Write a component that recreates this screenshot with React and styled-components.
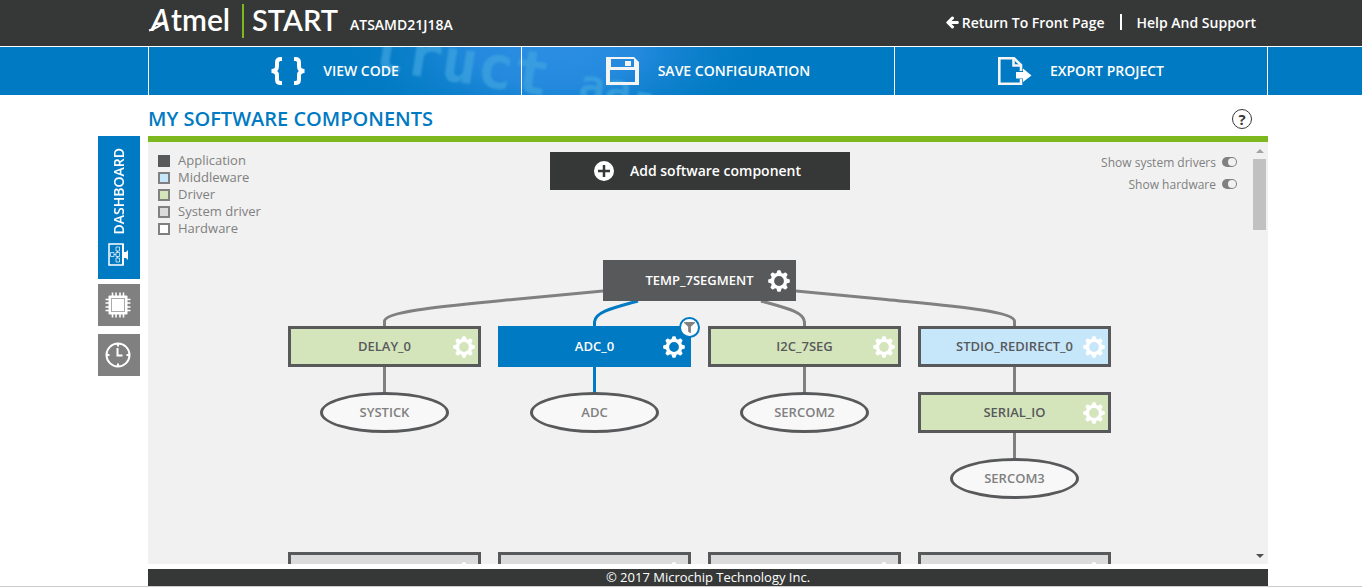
import { useState } from "react";
import { FaArrowLeft, FaFilter } from "react-icons/fa";
import styled, { createGlobalStyle } from "styled-components";

const GlobalStyle = createGlobalStyle`
  * {
    box-sizing: border-box;
  }
  body {
    margin: 0;
    background: #fff;
    font-family: "Open Sans", "Noto Sans", sans-serif;
    font-size: 13px;
    color: #808080;
  }
  button {
    font-family: inherit;
    cursor: pointer;
  }
`;
const Page = styled.div`
  display: flex;
  flex-direction: column;
  height: 100vh;
  border-bottom: 1px solid #ccc;
`;
/* every band keeps its content in the same centred column */
const Band = styled.div`
  padding-left: 4px;
  display: flex;
  justify-content: center;
`;
const Column = styled.div`
  width: 100%;
  max-width: 1170px;
  padding-left: 50px;
  display: flex;
`;
const HeaderBand = styled(Band).attrs({ as: "header" })`
  background: #363837;
  border-bottom: 1px solid #fff;
`;
const HeaderRow = styled(Column)`
  height: 46px;
  padding-right: 12px;
  justify-content: space-between;
  font-size: 14px;
  font-weight: 600;
  color: #fff;
`;
const Brand = styled.div`
  display: flex;
  align-items: flex-start;
`;
const Chip = styled.span`
  line-height: 20px;
  padding: 15px 0 0 8px;
`;
const TopLinks = styled.nav`
  display: flex;
  align-items: center;
  gap: 15px;
  padding-bottom: 2px;
  a {
    display: flex;
    align-items: center;
    gap: 3px;
    color: #fff;
    text-decoration: none;
  }
`;
const Divider = styled.span`
  width: 2px;
  height: 16px;
  background: #fff;
`;
const ArrowIcon = styled(FaArrowLeft)`
  stroke: #fff;
  stroke-width: 40px;
`;
const ActionBand = styled(Band)`
  position: relative;
  overflow: hidden;
  background: #007ac2;
`;
const Texture = styled.svg`
  position: absolute;
  top: 0;
  left: 50%;
  margin-left: -381px;
`;
const ActionRow = styled(Column)`
  position: relative;
`;
const Actions = styled.div`
  flex: 1;
  display: grid;
  grid-template-columns: repeat(3, 1fr);
  height: 48px;
  border-left: 1px solid #fff;
`;
const Action = styled.button`
  display: flex;
  align-items: center;
  justify-content: center;
  gap: 18px;
  padding: 0;
  border: 0;
  border-right: 1px solid #fff;
  background: none;
  color: #fff;
  font-size: 14px;
  font-weight: 600;
`;
const ButtonText = styled.span`
  padding-bottom: 2px;
`;
const MainBand = styled(Band).attrs({ as: "main" })`
  flex: 1;
  min-height: 0;
`;
const MainRow = styled(Column)`
  padding-left: 0;
`;
const Tabs = styled.nav`
  width: 50px;
  padding-top: 41px;
`;
const Tab = styled.button`
  display: flex;
  flex-direction: column;
  align-items: center;
  justify-content: center;
  gap: 9px;
  width: 42px;
  height: ${(p) => (p.$active ? "143px" : "42px")};
  margin-bottom: ${(p) => (p.$active ? "5px" : "8px")};
  padding: 0 2px 0 0;
  border: 0;
  background: ${(p) => (p.$active ? "#007ac2" : "#808080")};
  color: #fff;
  font-size: 14px;
  font-weight: 600;
`;
const TabLabel = styled.span`
  writing-mode: vertical-rl;
  transform: rotate(180deg);
`;
const Content = styled.div`
  flex: 1;
  min-width: 0;
  display: flex;
  flex-direction: column;
`;
const TitleRow = styled.div`
  display: flex;
  align-items: center;
  justify-content: space-between;
  height: 41px;
  padding: 6px 16px 0 0;
  h1 {
    margin: 0;
    font-size: 20px;
    font-weight: 600;
    color: #007ac2;
  }
`;
const HelpButton = styled.button`
  width: 20px;
  height: 20px;
  padding: 0;
  border: 1px solid #363837;
  border-radius: 50%;
  background: none;
  color: #363837;
  font-size: 15px;
  font-weight: 700;
  line-height: 18px;
`;
const Panel = styled.div`
  flex: 1;
  min-height: 0;
  display: flex;
  border-top: 6px solid #7db91e;
  background: #f1f1f1;
`;
const Canvas = styled.div`
  flex: 1;
  overflow: hidden;
`;
const Toolbar = styled.div`
  display: grid;
  grid-template-columns: 1fr 300px 1fr;
  align-items: start;
  padding: 10px 10px 0;
`;
const Legend = styled.ul`
  margin: 0;
  padding: 0;
  list-style: none;
`;
const LegendItem = styled.li`
  display: flex;
  align-items: center;
  gap: 8px;
  line-height: 17px;
`;
const Swatch = styled.span`
  width: 12px;
  height: 12px;
  border: 2px solid ${(p) => p.$border || "#808080"};
  background: ${(p) => p.$fill};
`;
const AddButton = styled.button`
  display: flex;
  align-items: center;
  justify-content: center;
  gap: 16px;
  height: 38px;
  padding: 0 4px 0 0;
  border: 0;
  background: #363837;
  color: #fff;
  font-size: 14px;
  font-weight: 600;
`;
const Toggles = styled.div`
  padding-right: 4px;
  font-size: 12px;
`;
const ToggleLabel = styled.label`
  display: flex;
  align-items: center;
  justify-content: flex-end;
  gap: 6px;
  line-height: 22px;
`;
const Toggle = styled.input.attrs({ type: "checkbox" })`
  appearance: none;
  display: flex;
  justify-content: flex-end;
  width: 15px;
  height: 10px;
  margin: 0 0 2px;
  padding: 1px;
  border-radius: 5px;
  background: #808080;
  cursor: pointer;
  &::after {
    content: "";
    width: 8px;
    height: 8px;
    border-radius: 50%;
    background: #f1f1f1;
  }
  &:checked {
    background: #007ac2;
  }
`;
const Diagram = styled.div`
  position: relative;
  width: 823px;
  height: 400px;
  margin: 23px auto 0;
`;
const Edges = styled.svg`
  position: absolute;
  top: 0;
  left: 0;
`;
const nodeColors = {
  application: { fill: "#58595b", border: "#58595b", text: "#fff" },
  middleware: { fill: "#c6e6fa", border: "#58595b", text: "#58595b" },
  driver: { fill: "#d4e5bb", border: "#58595b", text: "#58595b" },
  system: { fill: "#dbdbdb", border: "#58595b", text: "#58595b" },
  selected: { fill: "#007ac2", border: "#007ac2", text: "#fff" },
};
const Node = styled.button`
  position: absolute;
  left: ${(p) => p.$x}px;
  top: ${(p) => p.$y}px;
  width: 193px;
  height: 41px;
  padding: 0 0 2px;
  border: 3px solid ${(p) => nodeColors[p.$kind].border};
  background: ${(p) => nodeColors[p.$kind].fill};
  color: ${(p) => nodeColors[p.$kind].text};
  font-size: 13px;
  font-weight: 600;
`;
const Hardware = styled.button`
  position: absolute;
  left: ${(p) => p.$x}px;
  top: ${(p) => p.$y}px;
  width: 129px;
  height: 41px;
  padding: 0 0 2px;
  border: 3px solid #58595b;
  border-radius: 50%;
  background: #f8f8f8;
  color: #808080;
  font-size: 13px;
  font-weight: 600;
`;
const GearSvg = styled.svg`
  position: absolute;
  top: 7px;
  right: 3px;
`;
const Badge = styled.span`
  position: absolute;
  left: 391px;
  top: 57px;
  display: flex;
  align-items: center;
  justify-content: center;
  width: 21px;
  height: 21px;
  border: 2px solid #007ac2;
  border-radius: 50%;
  background: #fff;
  color: #808080;
`;
const Scrollbar = styled.div`
  width: 17px;
  display: flex;
  flex-direction: column;
  align-items: center;
`;
const ScrollArrow = styled.span`
  display: flex;
  align-items: center;
  justify-content: center;
  height: 17px;
  color: ${(p) => (p.$on ? "#505050" : "#a3a3a3")};
`;
const ScrollTrack = styled.div`
  flex: 1;
`;
const ScrollThumb = styled.div`
  width: 13px;
  height: 71px;
  background: #c1c1c1;
`;
const FooterBand = styled(Band).attrs({ as: "footer" })`
  padding-top: 5px;
`;
const FooterText = styled.div`
  flex: 1;
  background: #363837;
  color: #fff;
  font-size: 13px;
  font-weight: 500;
  line-height: 17px;
  text-align: center;
`;

function Logo() {
  return (
    <svg width="194" height="42" role="img" aria-label="Atmel START">
      <g fill="#fff" fontFamily="Lato, sans-serif">
        <text x="3" y="31" fontSize="30" fontStyle="italic">
          A
        </text>
        <text x="23" y="31" fontSize="30">
          tmel
        </text>
        <text x="104" y="31" fontSize="29">
          START
        </text>
      </g>
      <path d="M1 30.500Q10 28 16 22" stroke="#fff" strokeWidth="2" fill="none" />
      <rect x="94" y="4" width="2" height="34" fill="#7db91e" />
    </svg>
  );
}

function Gear() {
  return (
    <GearSvg width="22" height="22" viewBox="-11 -11 22 22" fill="#fff">
      <circle r="6.6" fill="none" stroke="#fff" strokeWidth="3.4" />
      {[0, 45, 90, 135, 180, 225, 270, 315].map((a) => (
        <path
          key={a}
          d="M-2.6 -7.4L-1.7 -10.2Q-1.5 -10.8 -0.9 -10.8H0.9Q1.5 -10.8 1.7 -10.2L2.6 -7.4Z"
          transform={`rotate(${a})`}
        />
      ))}
    </GearSvg>
  );
}

function BracesIcon() {
  return (
    <svg width="34" height="28" fill="none" stroke="#fff" strokeWidth="4">
      <path d="M11 2H9.500Q6 2 6 5.500V9.500Q6 14 0.500 14Q6 14 6 18.500V22.500Q6 26 9.500 26H11" />
      <path d="M23 2H24.500Q28 2 28 5.500V9.500Q28 14 33.500 14Q28 14 28 18.500V22.500Q28 26 24.500 26H23" />
    </svg>
  );
}

function SaveIcon() {
  return (
    <svg width="34" height="28" fill="#f4f4f4">
      <path
        fillRule="evenodd"
        d="M0 0H28L33 5V28H0ZM5 2V10H28V2ZM4 13V25H29V13Z"
      />
      <rect x="19" y="4" width="6" height="5" />
    </svg>
  );
}

function ExportIcon() {
  return (
    <svg width="34" height="28" fill="none" stroke="#f4f4f4" strokeWidth="2.6">
      <path d="M23 14V8L16 1.300H1.300V26.700H23V22" />
      <path d="M15.500 1.300V8.500H23" />
      <path d="M18 15H25V11.500L33.500 18.500L25 25V21.500H18Z" fill="#fff" stroke="none" />
    </svg>
  );
}

function PlusIcon() {
  return (
    <svg width="20" height="20">
      <circle cx="10" cy="10" r="10" fill="#fff" />
      <path d="M10 4V16M4 10H16" stroke="#363837" strokeWidth="2.5" />
    </svg>
  );
}

function DashboardIcon() {
  return (
    <svg width="22" height="24" fill="none" stroke="#fff">
      <rect x="2" y="1" width="14" height="21" strokeWidth="1.5" />
      <path d="M16 1V22" strokeWidth="2" />
      <path d="M17 9H19L21 7V17L19 15H17Z" fill="#fff" stroke="none" />
      <path
        d="M9 4H12.500V8H9ZM9 9.500H12.500V13.500H9ZM9 15H12.500V19H9ZM3.500 9.500H7V13.500H3.500ZM7 11.500H9M10.500 8V9.500M10.500 13.500V15"
        opacity="0.7"
      />
    </svg>
  );
}

function ChipIcon() {
  return (
    <svg width="26" height="26" fill="none" stroke="#fff">
      <path
        d="M7.500 0.500V25.500M11 0.500V25.500M15 0.500V25.500M18.500 0.500V25.500M0.500 7.500H25.500M0.500 11H25.500M0.500 15H25.500M0.500 18.500H25.500"
        strokeWidth="1.6"
      />
      <rect x="3.500" y="3.500" width="19" height="19" rx="1" fill="#fff" stroke="none" />
      <rect x="6.500" y="6.500" width="13" height="13" stroke="#aaa" />
    </svg>
  );
}

function ClockIcon() {
  return (
    <svg width="26" height="26" fill="none" stroke="#fff" strokeWidth="2">
      <circle cx="13" cy="13" r="11.5" />
      <path d="M13 1V4.500M13 21.500V25M1 13H4.500M21.500 13H25" />
      <path d="M12.500 6V13.500H17.500" />
    </svg>
  );
}

/* faded source code showing through the action bar */
function CodeTexture() {
  return (
    <Texture width="520" height="48" aria-hidden="true">
      <defs>
        <radialGradient
          id="glow"
          gradientUnits="userSpaceOnUse"
          cx="0"
          cy="0"
          r="1"
          gradientTransform="translate(255 0) scale(230 110)"
        >
          <stop offset="0" stopColor="#2b8ee3" />
          <stop offset="0.35" stopColor="#258ade" />
          <stop offset="1" stopColor="#007ac2" stopOpacity="0" />
        </radialGradient>
        <filter id="soft">
          <feGaussianBlur stdDeviation="1.2" />
        </filter>
      </defs>
      <rect width="520" height="48" fill="url(#glow)" />
      <g
        fill="#3fa5e0"
        opacity="0.7"
        filter="url(#soft)"
        fontFamily="DejaVu Sans Mono, monospace"
        fontWeight="700"
      >
        <text x="68" y="21" fontSize="60" transform="rotate(9 68 21)">
          truct
        </text>
        <text x="277" y="52" fontSize="44" transform="rotate(8 277 52)">
          aa-
        </text>
      </g>
    </Texture>
  );
}

const legend = [
  { name: "Application", fill: "#58595b", border: "#58595b" },
  { name: "Middleware", fill: "#c6e6fa" },
  { name: "Driver", fill: "#d4e5bb" },
  { name: "System driver", fill: "#dbdbdb" },
  { name: "Hardware", fill: "#fff" },
];
const nodes = [
  { name: "TEMP_7SEGMENT", kind: "application", x: 315, y: 0 },
  { name: "DELAY_0", kind: "driver", x: 0, y: 66 },
  { name: "ADC_0", kind: "selected", x: 210, y: 66 },
  { name: "I2C_7SEG", kind: "driver", x: 420, y: 66 },
  { name: "STDIO_REDIRECT_0", kind: "middleware", x: 630, y: 66 },
  { name: "SERIAL_IO", kind: "driver", x: 630, y: 132 },
];
const hardware = [
  { name: "SYSTICK", x: 32, y: 132 },
  { name: "ADC", x: 242, y: 132 },
  { name: "SERCOM2", x: 452, y: 132 },
  { name: "SERCOM3", x: 662, y: 198 },
];
const systemDrivers = [0, 210, 420, 630];

export default function App() {
  const [showSystem, setShowSystem] = useState(false);
  const [showHardware, setShowHardware] = useState(false);
  return (
    <Page>
      <GlobalStyle />
      <HeaderBand>
        <HeaderRow>
          <Brand>
            <Logo />
            <Chip>ATSAMD21J18A</Chip>
          </Brand>
          <TopLinks>
            <a href="#front">
              <ArrowIcon size={13} />
              Return To Front Page
            </a>
            <Divider />
            <a href="#help">Help And Support</a>
          </TopLinks>
        </HeaderRow>
      </HeaderBand>
      <ActionBand>
        <CodeTexture />
        <ActionRow>
          <Actions>
            <Action>
              <BracesIcon />
              <ButtonText>VIEW CODE</ButtonText>
            </Action>
            <Action>
              <SaveIcon />
              <ButtonText>SAVE CONFIGURATION</ButtonText>
            </Action>
            <Action>
              <ExportIcon />
              <ButtonText>EXPORT PROJECT</ButtonText>
            </Action>
          </Actions>
        </ActionRow>
      </ActionBand>
      <MainBand>
        <MainRow>
          <Tabs>
            <Tab $active>
              <TabLabel>DASHBOARD</TabLabel>
              <DashboardIcon />
            </Tab>
            <Tab aria-label="Pinmux">
              <ChipIcon />
            </Tab>
            <Tab aria-label="Clocks">
              <ClockIcon />
            </Tab>
          </Tabs>
          <Content>
            <TitleRow>
              <h1>MY SOFTWARE COMPONENTS</h1>
              <HelpButton>?</HelpButton>
            </TitleRow>
            <Panel>
              <Canvas>
                <Toolbar>
                  <Legend>
                    {legend.map((item) => (
                      <LegendItem key={item.name}>
                        <Swatch $fill={item.fill} $border={item.border} />
                        {item.name}
                      </LegendItem>
                    ))}
                  </Legend>
                  <AddButton>
                    <PlusIcon />
                    <ButtonText>Add software component</ButtonText>
                  </AddButton>
                  <Toggles>
                    <ToggleLabel>
                      Show system drivers
                      <Toggle
                        checked={showSystem}
                        onChange={() => setShowSystem(!showSystem)}
                      />
                    </ToggleLabel>
                    <ToggleLabel>
                      Show hardware
                      <Toggle
                        checked={showHardware}
                        onChange={() => setShowHardware(!showHardware)}
                      />
                    </ToggleLabel>
                  </Toggles>
                </Toolbar>
                <Diagram>
                  <Edges
                    width="823"
                    height="240"
                    fill="none"
                    stroke="#808080"
                    strokeWidth="3"
                  >
                    <path d="M315 31L225 39.500C160 46 97 51 96.500 61V134" />
                    <path d="M508 31L598 39.500C663 46 726 51 726.500 61V200" />
                    <path d="M473 41C498 48 516 52 516.500 62V134" />
                    <path d="M350 41C325 48 307 52 306.500 62V134" stroke="#007ac2" />
                  </Edges>
                  {nodes.map((n) => (
                    <Node key={n.name} $kind={n.kind} $x={n.x} $y={n.y}>
                      {n.name}
                      <Gear />
                    </Node>
                  ))}
                  {hardware.map((h) => (
                    <Hardware key={h.name} $x={h.x} $y={h.y}>
                      {h.name}
                    </Hardware>
                  ))}
                  {systemDrivers.map((x) => (
                    <Node key={x} $kind="system" $x={x} $y={292} aria-label="System driver">
                      <Gear />
                    </Node>
                  ))}
                  <Badge>
                    <FaFilter size={11} />
                  </Badge>
                </Diagram>
              </Canvas>
              <Scrollbar>
                <ScrollArrow>
                  <svg width="8" height="4" fill="currentColor">
                    <path d="M0 4L4 0L8 4Z" />
                  </svg>
                </ScrollArrow>
                <ScrollTrack>
                  <ScrollThumb />
                </ScrollTrack>
                <ScrollArrow $on>
                  <svg width="8" height="4" fill="currentColor">
                    <path d="M0 0L4 4L8 0Z" />
                  </svg>
                </ScrollArrow>
              </Scrollbar>
            </Panel>
          </Content>
        </MainRow>
      </MainBand>
      <FooterBand>
        <Column>
          <FooterText>© 2017 Microchip Technology Inc.</FooterText>
        </Column>
      </FooterBand>
    </Page>
  );
}
